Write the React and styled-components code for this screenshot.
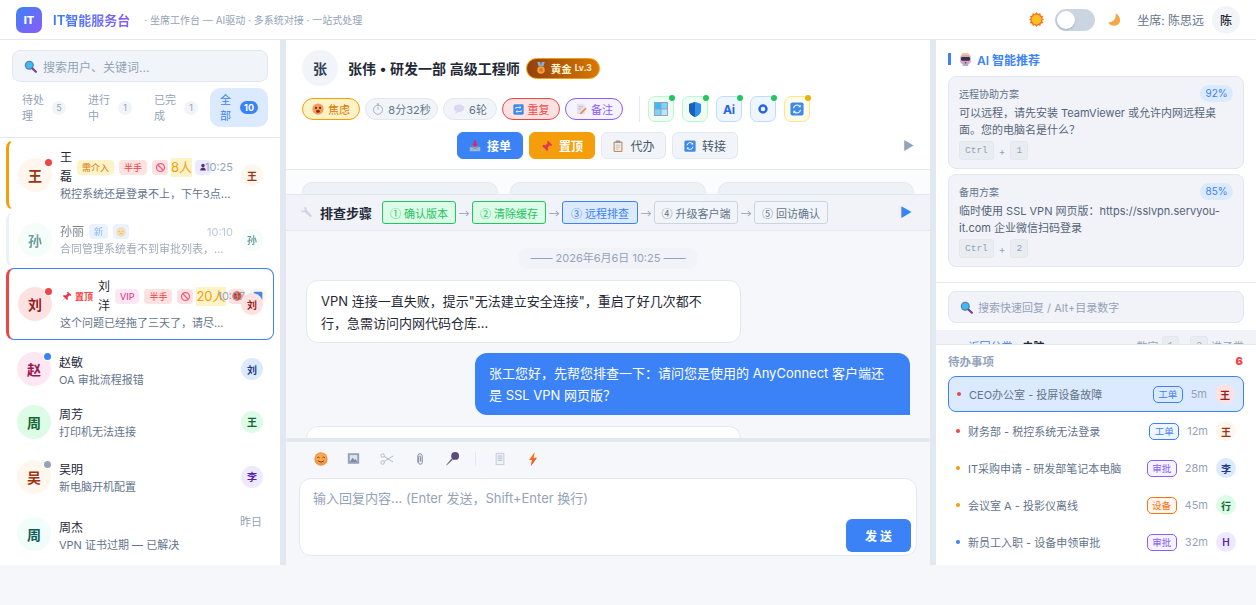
import React from 'react';
import styled, { createGlobalStyle } from 'styled-components';

const GlobalStyle = createGlobalStyle`
  html, body { margin: 0; padding: 0; background: #f5f7fb; }
  body { font-family: Inter, "Noto Sans CJK SC", "Noto Sans", sans-serif; color: #1f2937; }
  * { box-sizing: border-box; }
`;

const Shell = styled.div`
  height: 565px;
  display: flex;
  flex-direction: column;
  overflow: hidden;
`;

const TopBar = styled.header`
  height: 40px;
  flex: none;
  display: flex;
  align-items: center;
  padding: 0 16px;
  background: #fff;
  border-bottom: 1px solid #e2e8f0;
`;

const Logo = styled.div`
  width: 26px;
  height: 26px;
  border-radius: 7px;
  background: linear-gradient(135deg, #3b82f6, #8b5cf6);
  color: #fff;
  font-size: 11px;
  font-weight: 800;
  display: flex;
  align-items: center;
  justify-content: center;
`;

const Brand = styled.div`
  margin-left: 11px;
  font-size: 13px;
  font-weight: 700;
  background: linear-gradient(90deg, #3b82f6, #8b5cf6);
  -webkit-background-clip: text;
  background-clip: text;
  color: transparent;
`;

const Tagline = styled.div`
  margin-left: 14px;
  font-size: 10px;
  color: #94a3b8;
`;

const TopRight = styled.div`
  margin-left: auto;
  display: flex;
  align-items: center;
`;

const Toggle = styled.div`
  width: 40px;
  height: 22px;
  margin: 0 12px 0 11px;
  border-radius: 11px;
  background: #cbd5e1;
  padding: 2px;
`;

const Knob = styled.div`
  width: 18px;
  height: 18px;
  border-radius: 50%;
  background: #fff;
  box-shadow: 0 1px 2px rgba(0, 0, 0, 0.2);
`;

const Agent = styled.span`
  margin: 0 8px 0 16px;
  font-size: 12px;
  color: #64748b;
`;

const AgentAvatar = styled.div`
  width: 28px;
  height: 28px;
  border-radius: 50%;
  background: #f1f5f9;
  font-size: 12px;
  font-weight: 500;
  display: flex;
  align-items: center;
  justify-content: center;
`;

const Columns = styled.div`
  flex: 1;
  min-height: 0;
  display: flex;
`;

const Splitter = styled.div`
  width: 6px;
  flex: none;
  background: #e2e8f0;
`;

/* left column */
const LeftPanel = styled.aside`
  width: 280px;
  flex: none;
  background: #fff;
  display: flex;
  flex-direction: column;
  overflow: hidden;
`;

const SearchWrap = styled.div`
  padding: 10px 12px 6px;
`;

const SearchBox = styled.div`
  height: 32px;
  display: flex;
  align-items: center;
  gap: 6px;
  padding: 0 11px;
  background: #f1f5f9;
  border: 1px solid #e2e8f0;
  border-radius: 8px;
  font-size: 12px;
  color: #94a3b8;
`;

const TabRow = styled.div`
  display: grid;
  grid-template-columns: 64px 64px 64px 58px;
  gap: 2px;
  margin: 0 12px;
  padding-bottom: 10px;
`;

const Tab = styled.div`
  height: 39px;
  padding: 0 10px;
  border-radius: 10px;
  display: flex;
  align-items: center;
  gap: 8px;
  font-size: 11px;
  line-height: 16px;
  color: ${p => (p.$active ? '#3b82f6' : '#94a3b8')};
  background: ${p => (p.$active ? '#dbeafe' : 'transparent')};
`;

const TabLabel = styled.span`
  flex: 1;
  min-width: 0;
`;

const TabCount = styled.span`
  flex: none;
  min-width: ${p => (p.$active ? '18px' : '14px')};
  height: ${p => (p.$active ? '13px' : '14px')};
  border-radius: 7px;
  font-size: 9px;
  font-weight: ${p => (p.$active ? 700 : 400)};
  text-align: center;
  line-height: ${p => (p.$active ? '13px' : '14px')};
  color: ${p => (p.$active ? '#fff' : '#94a3b8')};
  background: ${p => (p.$active ? '#3b82f6' : '#f1f5f9')};
`;

const ChatList = styled.div`
  flex: 1;
  min-height: 0;
  border-top: 1px solid #e2e8f0;
  padding-top: 2px;
  overflow: hidden;
`;

const ChatItem = styled.div`
  position: relative;
  display: flex;
  align-items: center;
  height: ${p => p.$height}px;
  margin: ${p => p.$gap || 0}px 6px 0;
  padding: 0 10px 0 9px;
  border: 1px solid ${p => (p.$selected ? '#3b82f6' : 'transparent')};
  border-left: ${p => (p.$edge ? '3px' : '2px')} solid ${p => p.$edge || 'transparent'};
  border-radius: 8px;
  background: #fff;
  opacity: ${p => (p.$faded ? 0.6 : 1)};
`;

const Avatar = styled.div`
  position: relative;
  flex: none;
  width: ${p => p.$size}px;
  height: ${p => p.$size}px;
  border-radius: 50%;
  display: flex;
  align-items: center;
  justify-content: center;
  font-size: ${p => p.$font}px;
  font-weight: 600;
  color: ${p => p.$fg};
  background: ${p => p.$bg};
`;

const StatusDot = styled.i`
  position: absolute;
  top: 1px;
  right: 0;
  width: 7px;
  height: 7px;
  border-radius: 50%;
  background: ${p => p.$color};
  box-shadow: 0 0 0 1px #fff;
`;

const ChatBody = styled.div`
  flex: 1;
  min-width: 0;
  margin: 0 8px;
`;

const ChatHead = styled.div`
  display: flex;
  align-items: center;
`;

const NameRow = styled.div`
  flex: 1;
  min-width: 0;
  display: flex;
  align-items: center;
  gap: 5px;
`;

const Name = styled.span`
  flex: 0 1 auto;
  font-size: 12px;
  line-height: 19px;
  color: #1f2937;
`;

const Tag = styled.span`
  flex: none;
  height: 15px;
  padding: 0 5px;
  border-radius: 4px;
  display: inline-flex;
  align-items: center;
  justify-content: center;
  font-size: 9px;
  line-height: 15px;
  white-space: nowrap;
  color: ${p => p.$fg};
  background: ${p => p.$bg};
`;

const IconTag = styled(Tag)`
  width: 16px;
  padding: 0;
`;

const CountTag = styled.span`
  flex: none;
  margin: 0 -2px;
  font-size: 13px;
  line-height: 19px;
  white-space: nowrap;
  color: #f59e0b;
  background: #fef3c7;
`;

const PinMark = styled.span`
  flex: none;
  margin-left: 2px;
  display: inline-flex;
  align-items: center;
  gap: 3px;
  font-size: 9px;
  font-weight: 600;
  white-space: nowrap;
  color: #ef4444;
`;

const Time = styled.span`
  flex: none;
  margin-right: ${p => (p.$pushed ? '-12px' : '0')};
  font-size: 11px;
  color: #94a3b8;
  position: relative;
`;

const Preview = styled.div`
  margin-top: ${p => p.$top || 0}px;
  font-size: 11px;
  line-height: 16px;
  color: #64748b;
  white-space: nowrap;
`;

const CornerTime = styled.span`
  position: absolute;
  top: 8px;
  right: 11px;
  font-size: 11px;
  color: #94a3b8;
`;

/* center column */
const CenterPanel = styled.main`
  flex: 1;
  min-width: 0;
  display: flex;
  flex-direction: column;
  background: #f5f7fb;
`;

const TicketHeader = styled.section`
  height: 130px;
  flex: none;
  padding: 10px 16px 0;
  background: #fff;
  border-bottom: 1px solid #e2e8f0;
`;

const UserRow = styled.div`
  display: flex;
  align-items: center;
  gap: 10px;
`;

const TitleText = styled.span`
  font-size: 14px;
  font-weight: 600;
  color: #1f2937;
`;

const LevelBadge = styled.span`
  height: 21px;
  margin-left: -4px;
  padding: 0 7px 0 8px;
  display: inline-flex;
  align-items: center;
  gap: 4px;
  border-radius: 11px;
  border: 1px solid #f59e0b;
  background: linear-gradient(90deg, #92400e, #d97706);
  color: #fef3c7;
  font-size: 10.5px;
  font-weight: 700;
  small { margin-left: -1px; font-size: 8.5px; font-weight: 700; }
`;

const MetaRow = styled.div`
  margin-top: 10px;
  height: 26px;
  display: flex;
  align-items: center;
  gap: 5px;
`;

const Chip = styled.span`
  height: 22px;
  width: ${p => p.$width}px;
  display: inline-flex;
  align-items: center;
  justify-content: center;
  gap: 4px;
  border-radius: 11px;
  font-size: 11px;
  white-space: nowrap;
  color: ${p => p.$fg};
  background: ${p => p.$bg};
  border: 1px solid ${p => p.$line};
`;

const MetaDivider = styled.span`
  width: 1px;
  height: 26px;
  margin: 0 3px 0 11px;
  background: #e2e8f0;
`;

const ToolRow = styled.div`
  display: flex;
  gap: 8px;
`;

const ToolIcon = styled.div`
  position: relative;
  width: 26px;
  height: 26px;
  border-radius: 7px;
  display: flex;
  align-items: center;
  justify-content: center;
  font-size: 12px;
  font-weight: 700;
  color: #2563eb;
  background: ${p => p.$bg};
  border: 1px solid ${p => p.$line};
`;

const ToolLed = styled.i`
  position: absolute;
  top: -2px;
  right: -2px;
  width: 6px;
  height: 6px;
  border-radius: 50%;
  background: ${p => p.$color};
`;

const ActionRow = styled.div`
  margin-top: 10px;
  display: flex;
  align-items: center;
`;

const ActionGroup = styled.div`
  flex: 1;
  display: flex;
  justify-content: center;
  gap: 6px;
`;

const ActionButton = styled.button`
  height: 27px;
  width: ${p => p.$width || 66}px;
  padding: 0;
  display: inline-flex;
  align-items: center;
  justify-content: center;
  gap: 6px;
  border-radius: 6px;
  font-family: inherit;
  font-size: 12px;
  font-weight: ${p => (p.$solid ? 600 : 400)};
  color: ${p => (p.$solid ? '#fff' : '#475569')};
  background: ${p => p.$solid || '#f1f5f9'};
  border: 1px solid ${p => p.$solid || '#e2e8f0'};
`;

const PlayButton = styled.span`
  flex: none;
  width: 21px;
  text-align: right;
  font-size: 12px;
  line-height: 1;
  color: #94a3b8;
`;

const CardStrip = styled.div`
  height: 24px;
  flex: none;
  padding: 12px 16px 0;
  display: grid;
  grid-template-columns: repeat(3, 1fr);
  gap: 12px;
  overflow: hidden;
  background: #fbfcfe;
`;

const GhostCard = styled.div`
  height: 40px;
  background: #eef1f6;
  border: 1px solid #e2e8f0;
  border-radius: 10px;
`;

const StepBar = styled.div`
  height: 37px;
  flex: none;
  display: flex;
  align-items: center;
  padding: 0 18px 0 14px;
  background: #f1f3f8;
  border-top: 1px solid #e2e8f0;
  border-bottom: 1px solid #e2e8f0;
`;

const StepTitle = styled.span`
  margin: 0 10px 0 7px;
  font-size: 13px;
  font-weight: 600;
  color: #1f2937;
  white-space: nowrap;
`;

const Step = styled.span`
  flex: none;
  height: 23px;
  width: ${p => p.$width}px;
  display: inline-flex;
  align-items: center;
  justify-content: center;
  gap: 3px;
  border-radius: 3px;
  font-size: 11px;
  white-space: nowrap;
  color: ${p => p.$fg};
  background: ${p => p.$bg};
  border: 1px solid ${p => p.$line};
`;

const StepNumber = styled.span`
  font-family: "Noto Sans CJK SC", sans-serif;
  font-size: 11px;
`;

const StepArrow = styled.span`
  flex: none;
  width: 16px;
  text-align: center;
  font-family: "Noto Sans CJK SC", sans-serif;
  font-size: 11px;
  color: #94a3b8;
`;

const StepEnd = styled.span`
  margin-left: auto;
  font-size: 13px;
  line-height: 1;
  color: #3b82f6;
`;

const Messages = styled.div`
  flex: 1;
  min-height: 0;
  overflow: hidden;
  padding: 17px 20px 0;
  display: flex;
  flex-direction: column;
  align-items: flex-start;
`;

const DatePill = styled.div`
  align-self: center;
  height: 21px;
  padding: 0 12px;
  margin-bottom: 11px;
  border-radius: 10px;
  background: #f1f3f8;
  font-size: 11px;
  line-height: 21px;
  color: #94a3b8;
`;

const Bubble = styled.div`
  flex: none;
  width: 435px;
  padding: ${p => (p.$mine ? '9px 14px' : '8.5px 14px')};
  font-size: 13px;
  line-height: 22px;
  border-radius: ${p => (p.$mine ? '12px 12px 0 12px' : '12px')};
  margin-bottom: ${p => (p.$mine ? '11px' : '10px')};
  align-self: ${p => (p.$mine ? 'flex-end' : 'flex-start')};
  color: ${p => (p.$mine ? '#fff' : '#1f2937')};
  background: ${p => (p.$mine ? '#3b82f6' : '#fff')};
  border: ${p => (p.$mine ? '0' : '1px solid #e2e8f0')};
`;

const InputSplit = styled.div`
  height: 4px;
  flex: none;
  background: #e2e8f0;
`;

const Composer = styled.section`
  height: 123px;
  flex: none;
  padding: 5px 13px 0;
`;

const ComposeTools = styled.div`
  height: 23px;
  display: flex;
  align-items: center;
  padding-left: 14px;
  gap: 18px;
`;

const ComposeTool = styled.span`
  width: 15px;
  display: flex;
  justify-content: center;
`;

const ComposeDivider = styled.i`
  width: 1px;
  height: 14px;
  margin: 0 -2px 0 -3px;
  background: #e2e8f0;
`;

const InputBox = styled.div`
  position: relative;
  margin-top: 8px;
  height: 78px;
  padding: 11px 13px;
  background: #fff;
  border: 1px solid #e2e8f0;
  border-radius: 12px;
  font-size: 13px;
  line-height: 16px;
  color: #94a3b8;
`;

const SendButton = styled.button`
  position: absolute;
  right: 5px;
  bottom: 3px;
  width: 65px;
  height: 33px;
  border: 0;
  border-radius: 6px;
  background: #3b82f6;
  color: #fff;
  font-family: inherit;
  font-size: 12px;
  font-weight: 600;
`;

/* right column */
const RightPanel = styled.aside`
  width: 320px;
  flex: none;
  display: flex;
  flex-direction: column;
  background: #fff;
  overflow: hidden;
`;

const AiSection = styled.section`
  height: 243px;
  flex: none;
  padding: 13px 12px 0;
  border-bottom: 1px solid #e2e8f0;
`;

const AiTitle = styled.div`
  height: 12px;
  display: flex;
  align-items: center;
  gap: 5px;
  padding-left: 8px;
  border-left: 3px solid #3b82f6;
  font-size: 12px;
  font-weight: 600;
  color: #3b82f6;
  margin-bottom: 11px;
`;

const Suggestion = styled.div`
  height: 93px;
  padding: 8px 10px 0;
  margin-bottom: 5px;
  background: #f1f3f8;
  border: 1px solid #e2e8f0;
  border-radius: 8px;
`;

const SuggestionHead = styled.div`
  height: 17px;
  display: flex;
  align-items: center;
  justify-content: space-between;
  font-size: 10px;
  color: #64748b;
`;

const Score = styled.span`
  width: 33px;
  height: 17px;
  border-radius: 9px;
  background: #dbeafe;
  color: #3b82f6;
  font-size: 10px;
  line-height: 17px;
  text-align: center;
`;

const SuggestionText = styled.div`
  margin-top: 3px;
  font-size: 11px;
  line-height: 17px;
  color: #556378;
`;

const Shortcut = styled.div`
  margin-top: 2px;
  display: flex;
  align-items: center;
  gap: 5px;
  font-size: 10px;
  color: #94a3b8;
`;

const Key = styled.kbd`
  height: 19px;
  padding: 0 5px;
  border-radius: 3px;
  background: #e9edf2;
  border: 1px solid #e2e8f0;
  font-family: "Liberation Mono", monospace;
  font-size: 9.5px;
  line-height: 17px;
  color: #94a3b8;
`;

const QuickSearchWrap = styled.div`
  height: 47px;
  flex: none;
  padding: 8px 12px 0;
`;

const QuickSearch = styled(SearchBox)`
  gap: 5px;
  background: #f1f3f8;
  font-size: 11px;
`;

const CrumbStrip = styled.div`
  height: 14px;
  flex: none;
  overflow: hidden;
  padding: 6px 12px 0 19px;
  background: #f1f3f8;
`;

const CrumbRow = styled.div`
  height: 19px;
  display: flex;
  align-items: center;
  justify-content: space-between;
  font-size: 11px;
  color: #94a3b8;
`;

const CrumbBack = styled.span`
  color: #3b82f6;
  margin-right: 10px;
`;

const CrumbCurrent = styled.span`
  color: #1f2937;
  font-weight: 600;
`;

const CrumbHint = styled.span`
  display: flex;
  align-items: center;
  gap: 3px;
`;

const TodoSection = styled.section`
  flex: 1;
  min-height: 0;
  padding: 0 12px;
  background: #fff;
  border-top: 1px solid #e2e8f0;
`;

const TodoHead = styled.div`
  height: 31px;
  display: flex;
  align-items: center;
  justify-content: space-between;
  font-size: 11.5px;
  font-weight: 600;
  color: #94a3b8;
  strong { color: #ef4444; font-size: 11px; padding-right: 1px; }
`;

const TodoRow = styled.div`
  height: 36px;
  margin-bottom: 1px;
  padding: 0 8px;
  display: flex;
  align-items: center;
  gap: 8px;
  border-radius: 8px;
  border: ${p => (p.$active ? '1px solid #3b82f6' : '0')};
  background: ${p => (p.$active ? '#dbeafe' : '#fff')};
`;

const TodoDot = styled.i`
  flex: none;
  width: 4px;
  height: 4px;
  border-radius: 50%;
  background: ${p => p.$color};
`;

const TodoText = styled.span`
  flex: 1;
  min-width: 0;
  font-size: 11px;
  color: #64748b;
  white-space: nowrap;
`;

const TodoTag = styled.span`
  flex: none;
  width: 30px;
  height: 17px;
  border-radius: 5px;
  font-size: 9.5px;
  line-height: 15px;
  text-align: center;
  color: ${p => p.$color};
  background: ${p => p.$bg};
  border: 1px solid ${p => p.$color};
`;

const TodoAge = styled.span`
  flex: none;
  font-size: 11px;
  color: #94a3b8;
`;

const IconSvg = styled.svg`
  flex: none;
  display: block;
`;

const drawings = {
  search: <><circle cx="6.5" cy="6.5" r="4.8" fill="#38bdf8" stroke="#5b7fa6" strokeWidth="1.6" /><path d="M10.4 10.4 14.6 14.6" stroke="#7b3f98" strokeWidth="2.6" strokeLinecap="round" /></>,
  sun: <><path d="M8 0l1.6 2.2L12 1l.6 2.6 2.6.6-1.2 2.4L16 8l-2 1.4 1.2 2.4-2.6.6L12 15l-2.4-1.2L8 16l-1.6-2.2L4 15l-.6-2.6-2.6-.6L2 9.4 0 8l2-1.4L.8 4.2l2.6-.6L4 1l2.4 1.2Z" fill="#f97316" /><circle cx="8" cy="8" r="5.2" fill="#fbbf24" /></>,
  moon: <path d="M9.5.8C11 5.5 8 10.5 1.5 10.8 4 15.5 11.5 16 14.3 11.2 16.3 7 13.8 1.8 9.5.8Z" fill="#f5a742" />,
  robot: <><rect x="3.5" y="0" width="9" height="4" rx="1.5" fill="#f6c98a" /><rect x="1.5" y="2.5" width="13" height="11" rx="3" fill="#e29fc0" /><rect x="2.5" y="5" width="11" height="4.6" rx="1.6" fill="#27364f" /><rect x="4.5" y="11" width="7" height="5" rx="1" fill="#b9a5d6" /><circle cx="8" cy="12" r="1" fill="#3f3f5a" /></>,
  anxious: <><circle cx="8" cy="8" r="7.5" fill="#f59a5b" /><circle cx="5.3" cy="6.5" r="1.4" fill="#5b2a12" /><circle cx="10.7" cy="6.5" r="1.4" fill="#5b2a12" /><ellipse cx="8" cy="11" rx="2.6" ry="2" fill="#8a2f1b" /></>,
  stopwatch: <><circle cx="8" cy="9" r="6" fill="none" stroke="#94a3b8" strokeWidth="1.1" /><path d="M6.5 1.2h3M8 1.2V3M8 9V4.8" stroke="#94a3b8" strokeWidth="1.1" fill="none" /></>,
  thought: <><ellipse cx="8" cy="7" rx="7" ry="5" fill="#ddd6f3" /><path d="M4 10.5 3 15 8 11Z" fill="#ddd6f3" /></>,
  repeat: <><rect x=".5" y=".5" width="15" height="15" rx="2" fill="#3f8ae8" /><path d="M4 7V5h7M9.5 3.2 11.5 5 9.5 6.8M12 9v2H5M6.5 9.2 4.5 11 6.5 12.8" fill="none" stroke="#fff" strokeWidth="1.2" /></>,
  memo: <><path d="M2.5 1h8l3 3v11h-11Z" fill="#e5e1ec" /><path d="M4.5 5h6M4.5 8h4" stroke="#b3adc0" /><path d="M7 13 14 6l1.5 1.5-7 7-2 .5Z" fill="#f08a4b" /></>,
  medal: <><path d="M3 0h4l1 5-3 1ZM13 0H9L8 5l3 1Z" fill="#7db4e6" /><circle cx="8" cy="10.5" r="5" fill="#f0a23c" /><circle cx="8" cy="10.5" r="2.6" fill="#d97c1a" /></>,
  inbox: <><path d="M1 9h14v6H1Z" fill="#9db4cf" /><path d="M1 9h4l1 2h4l1-2h4" fill="none" stroke="#5b83b3" /><path d="M6.4 1h3.2v4H12L8 9.5 4 5h2.4Z" fill="#e0245e" /></>,
  pin: <><path d="M9.5 1 15 6.5 13.5 8 12 7 9 10l.5 3L8 14.5 1.5 8 3 6.5l3 .5 3-3-1-1.5Z" fill="#e8354f" /><path d="M4.5 11.5 0.8 15.2" stroke="#a8b3c2" strokeWidth="1.2" /></>,
  clipboard: <><rect x="2" y="2" width="12" height="14" rx="1.5" fill="#c98a5e" /><rect x="3.5" y="3.8" width="9" height="10.8" fill="#f1ede7" /><rect x="5" y=".5" width="6" height="3" rx="1" fill="#8d98a8" /><path d="M5 7h6M5 9.5h6M5 12h4" stroke="#a8b3c2" /></>,
  refresh: <><rect x=".5" y=".5" width="15" height="15" rx="2" fill="#3f8ae8" /><path d="M4 7.2A4.2 4.2 0 0 1 11.4 5M12 8.8A4.2 4.2 0 0 1 4.6 11" fill="none" stroke="#fff" strokeWidth="1.3" /><path d="M12.2 3v3h-3ZM3.8 13v-3h3Z" fill="#fff" /></>,
  wrench: <path d="M1.5 4.5 4 6l2-1.5L4.8 1.8C7 .8 9 2.5 8.2 5l6 6.5c1 1.2-.8 3-2 2L6 7.6C3.6 8.4 1 7 1.5 4.5Z" fill="#d6d0e4" />,
  smile: <><circle cx="8" cy="8" r="7.6" fill="#f59145" /><circle cx="8" cy="7" r="6" fill="#f9b251" opacity=".7" /><path d="M3.6 6.6q1.4-1.6 2.8 0M9.6 6.6q1.4-1.6 2.8 0" stroke="#6b3410" strokeWidth="1" fill="none" /><path d="M4.5 10q3.5 3.4 7 0" stroke="#6b3410" strokeWidth="1.1" fill="none" /></>,
  picture: <><rect x="1" y="1.5" width="14" height="13" fill="#94a3b8" /><rect x="3.4" y="3.8" width="9.2" height="8.4" fill="#dbe3ee" /><path d="M3.4 12.2 7 7l2.5 3 1.2-1.3 1.9 3.5Z" fill="#7c8ba1" /></>,
  scissors: <><circle cx="3" cy="4" r="2" fill="none" stroke="#a8b3c2" strokeWidth="1" /><circle cx="3" cy="12" r="2" fill="none" stroke="#a8b3c2" strokeWidth="1" /><path d="M4.6 5 15 11.5M4.6 11 15 4.5" stroke="#a8b3c2" strokeWidth="1" /></>,
  clip: <path d="M5.5 12V4.5a2.5 2.5 0 0 1 5 0V12a2 2 0 0 1-4 0V6c0-1.6 2.2-1.6 2.2 0v5" fill="none" stroke="#7c8594" strokeWidth="1.1" />,
  mic: <><path d="M1.2 14.8 7 8l1.4 1.4-6.6 5.8Z" fill="#6b6676" /><circle cx="10.8" cy="5.2" r="4.2" fill="#5d4a78" /></>,
  page: <><rect x="3" y="1" width="10" height="14" fill="#c6d0e0" /><rect x="4.2" y="2.2" width="7.6" height="11.6" fill="#eef2f7" /><path d="M5.4 4.6h5.2M5.4 7h5.2M5.4 9.4h5.2" stroke="#a8b6c8" /></>,
  bolt: <><path d="M10 0 3.5 9H7L5.5 16 12.5 6.5H8.8Z" fill="#f97316" /><path d="M7 9 5.5 16 12.5 6.5Z" fill="#ef5a3c" /></>,
  blocked: <><circle cx="8" cy="8" r="5.8" fill="none" stroke="#ef5a7a" strokeWidth="1.8" /><path d="M4 4l8 8" stroke="#ef5a7a" strokeWidth="1.8" /></>,
  person: <><circle cx="8" cy="5" r="3.4" fill="#4c2f86" /><path d="M2.5 15c0-4.4 2.5-5.8 5.5-5.8s5.5 1.4 5.5 5.8Z" fill="#4c2f86" /></>,
  weary: <><circle cx="8" cy="8" r="7.5" fill="#f4c77a" /><path d="M4 7h2.6M9.4 7H12" stroke="#a3692a" strokeWidth="1" /><path d="M5.4 11.5q2.6-2 5.2 0" stroke="#a3692a" strokeWidth="1" fill="none" /></>,
  angry: <><circle cx="8" cy="8" r="7.5" fill="#e0563f" /><path d="M3.6 5l3 1.4M12.4 5l-3 1.4" stroke="#4a1a10" strokeWidth="1.2" /><path d="M5.4 11.4q2.6-2 5.2 0" stroke="#4a1a10" strokeWidth="1.1" fill="none" /></>,
  square: <rect x="1" y="1" width="14" height="14" rx="2" fill="#3f8ae8" />,
};

function Icon({ name, size = 12 }) {
  return <IconSvg width={size} height={size} viewBox="0 0 16 16">{drawings[name]}</IconSvg>;
}

const tones = {
  orange: ['#fff7ed', '#9a3412'],
  teal: ['#f0fdfa', '#115e59'],
  red: ['#fee2e2', '#991b1b'],
  pink: ['#fce7f3', '#9d174d'],
  blue: ['#dbeafe', '#1e3a8a'],
  green: ['#dcfce7', '#166534'],
  purple: ['#ede9fe', '#5b21b6'],
};

const tone = name => ({ $bg: tones[name][0], $fg: tones[name][1] });

const plainChats = [
  { id: 'zhao', initial: '赵', name: '赵敏', text: 'OA 审批流程报错', color: 'pink', dot: '#3b82f6', owner: '刘', ownerColor: 'blue', gap: 4, height: 50 },
  { id: 'fang', initial: '周', name: '周芳', text: '打印机无法连接', color: 'green', owner: '王', ownerColor: 'green', height: 55 },
  { id: 'wu', initial: '吴', name: '吴明', text: '新电脑开机配置', color: 'orange', dot: '#94a3b8', owner: '李', ownerColor: 'purple', height: 55 },
  { id: 'jie', initial: '周', name: '周杰', text: 'VPN 证书过期 — 已解决', color: 'teal', corner: '昨日', height: 60 },
];

const todos = [
  { text: 'CEO办公室 - 投屏设备故障', dot: '#ef4444', tag: '工单', tagColor: '#3b82f6', tagBg: '#dbeafe', age: '5m', who: '王', tone: 'red', active: true },
  { text: '财务部 - 税控系统无法登录', dot: '#ef4444', tag: '工单', tagColor: '#3b82f6', tagBg: '#eff6ff', age: '12m', who: '王', tone: 'orange' },
  { text: 'IT采购申请 - 研发部笔记本电脑', dot: '#f59e0b', tag: '审批', tagColor: '#8b5cf6', tagBg: '#f5f3ff', age: '28m', who: '李', tone: 'blue' },
  { text: '会议室 A - 投影仪离线', dot: '#f59e0b', tag: '设备', tagColor: '#f97316', tagBg: '#fff7ed', age: '45m', who: '行', tone: 'green' },
  { text: '新员工入职 - 设备申领审批', dot: '#3b82f6', tag: '审批', tagColor: '#8b5cf6', tagBg: '#f5f3ff', age: '32m', who: 'H', tone: 'purple' },
];

const steps = [
  { n: '①', label: '确认版本', width: 74, fg: '#22c55e', bg: '#dcfce7', line: '#22c55e' },
  { n: '②', label: '清除缓存', width: 74, fg: '#22c55e', bg: '#dcfce7', line: '#22c55e' },
  { n: '③', label: '远程排查', width: 76, fg: '#3b82f6', bg: '#dbeafe', line: '#3b82f6' },
  { n: '④', label: '升级客户端', width: 84, fg: '#64748b', bg: '#f1f5f9', line: '#cbd5e1' },
  { n: '⑤', label: '回访确认', width: 74, fg: '#64748b', bg: '#f1f5f9', line: '#cbd5e1' },
];

function WindowsGlyph() {
  return (
    <svg width="14" height="14" viewBox="0 0 14 14">
      <rect width="14" height="14" fill="#94a3b8" />
      <rect x="1" y="1" width="5.5" height="5.5" fill="#38bdf8" />
      <rect x="7.5" y="1" width="5.5" height="5.5" fill="#7dd3fc" />
      <rect x="1" y="7.5" width="5.5" height="5.5" fill="#7dd3fc" />
      <rect x="7.5" y="7.5" width="5.5" height="5.5" fill="#bae6fd" />
    </svg>
  );
}

function ShieldGlyph() {
  return (
    <svg width="14" height="15" viewBox="0 0 14 15">
      <path d="M7 0 L13 2 V8 C13 11.5 10 14 7 15 C4 14 1 11.5 1 8 V2 Z" fill="#94a3b8" />
      <path d="M7 0 L13 2 V8 C13 11.5 10 14 7 15 Z" fill="#2f8ff0" />
      <path d="M7 0 L1 2 V8 C1 11.5 4 14 7 15 Z" fill="#1d5fb8" />
    </svg>
  );
}

function RingGlyph() {
  return (
    <svg width="10" height="10" viewBox="0 0 10 10">
      <circle cx="5" cy="5" r="3.5" fill="none" stroke="#2563eb" strokeWidth="2.4" />
    </svg>
  );
}

export default function App() {
  return (
    <Shell>
      <GlobalStyle />
      <TopBar>
        <Logo>IT</Logo>
        <Brand>IT智能服务台</Brand>
        <Tagline>· 坐席工作台 — AI驱动 · 多系统对接 · 一站式处理</Tagline>
        <TopRight>
          <Icon name="sun" size={15} />
          <Toggle><Knob /></Toggle>
          <Icon name="moon" size={14} />
          <Agent>坐席: 陈思远</Agent>
          <AgentAvatar>陈</AgentAvatar>
        </TopRight>
      </TopBar>

      <Columns>
        <LeftPanel>
          <SearchWrap>
            <SearchBox><Icon name="search" size={13} />搜索用户、关键词...</SearchBox>
          </SearchWrap>
          <TabRow>
            <Tab><TabLabel>待处理</TabLabel><TabCount>5</TabCount></Tab>
            <Tab><TabLabel>进行中</TabLabel><TabCount>1</TabCount></Tab>
            <Tab><TabLabel>已完成</TabLabel><TabCount>1</TabCount></Tab>
            <Tab $active><TabLabel>全部</TabLabel><TabCount $active>10</TabCount></Tab>
          </TabRow>
          <ChatList>
            <ChatItem $height={70} $edge="#f59e0b">
              <Avatar $size={34} $font={14} {...tone('orange')}>王<StatusDot $color="#ef4444" /></Avatar>
              <ChatBody>
                <ChatHead>
                  <NameRow>
                    <Name>王磊</Name>
                    <Tag $fg="#d97706" $bg="#fef3c7">需介入</Tag>
                    <Tag $fg="#ef4444" $bg="#fee2e2">半手</Tag>
                    <IconTag $bg="#fee2e2"><Icon name="blocked" size={11} /></IconTag>
                    <CountTag>8人</CountTag>
                    <IconTag $bg="#ede9fe"><Icon name="person" size={8} /></IconTag>
                  </NameRow>
                  <Time>10:25</Time>
                </ChatHead>
                <Preview>税控系统还是登录不上，下午3点...</Preview>
              </ChatBody>
              <Avatar $size={22} $font={10} {...tone('orange')}>王</Avatar>
            </ChatItem>

            <ChatItem $height={55} $gap={2} $edge="#e2e8f0" $faded>
              <Avatar $size={34} $font={14} {...tone('teal')}>孙</Avatar>
              <ChatBody>
                <ChatHead>
                  <NameRow>
                    <Name>孙丽</Name>
                    <Tag $fg="#3b82f6" $bg="#dbeafe">新</Tag>
                    <IconTag $bg="#dbeafe"><Icon name="weary" size={10} /></IconTag>
                  </NameRow>
                  <Time>10:10</Time>
                </ChatHead>
                <Preview>合同管理系统看不到审批列表，...</Preview>
              </ChatBody>
              <Avatar $size={22} $font={10} {...tone('teal')}>孙</Avatar>
            </ChatItem>

            <ChatItem $height={72} $gap={1} $edge="#ef4444" $selected>
              <Avatar $size={34} $font={14} {...tone('red')}>刘<StatusDot $color="#ef4444" /></Avatar>
              <ChatBody>
                <ChatHead>
                  <NameRow>
                    <PinMark><Icon name="pin" size={10} />置顶</PinMark>
                    <Name>刘洋</Name>
                    <Tag $fg="#db2777" $bg="#fce7f3">VIP</Tag>
                    <Tag $fg="#ef4444" $bg="#fee2e2">半手</Tag>
                    <IconTag $bg="#fee2e2"><Icon name="blocked" size={11} /></IconTag>
                    <CountTag>20人</CountTag>
                    <IconTag $bg="#fee2e2"><Icon name="angry" size={10} /></IconTag>
                    <IconTag $bg="#fff7ed"><Icon name="square" size={10} /></IconTag>
                  </NameRow>
                  <Time $pushed>10:07</Time>
                </ChatHead>
                <Preview>这个问题已经拖了三天了，请尽...</Preview>
              </ChatBody>
              <Avatar $size={22} $font={10} {...tone('red')}>刘</Avatar>
            </ChatItem>

            {plainChats.map(chat => (
              <ChatItem key={chat.id} $height={chat.height} $gap={chat.gap}>
                <Avatar $size={34} $font={14} {...tone(chat.color)}>
                  {chat.initial}
                  {chat.dot && <StatusDot $color={chat.dot} />}
                </Avatar>
                <ChatBody>
                  <Name>{chat.name}</Name>
                  <Preview>{chat.text}</Preview>
                </ChatBody>
                {chat.owner && <Avatar $size={22} $font={10} {...tone(chat.ownerColor)}>{chat.owner}</Avatar>}
                {chat.corner && <CornerTime>{chat.corner}</CornerTime>}
              </ChatItem>
            ))}
          </ChatList>
        </LeftPanel>

        <Splitter />

        <CenterPanel>
          <TicketHeader>
            <UserRow>
              <Avatar $size={36} $font={14} $bg="#f1f5f9" $fg="#334155">张</Avatar>
              <TitleText>张伟 • 研发一部 高级工程师</TitleText>
              <LevelBadge><Icon name="medal" size={12} />黄金 <small>Lv.3</small></LevelBadge>
            </UserRow>
            <MetaRow>
              <Chip $width={58} $fg="#d97706" $bg="#fef3c7" $line="#f59e0b"><Icon name="anxious" />焦虑</Chip>
              <Chip $width={73} $fg="#64748b" $bg="#f1f5f9" $line="#e2e8f0"><Icon name="stopwatch" />8分32秒</Chip>
              <Chip $width={54} $fg="#64748b" $bg="#f1f5f9" $line="#e2e8f0"><Icon name="thought" />6轮</Chip>
              <Chip $width={58} $fg="#ef4444" $bg="#fee2e2" $line="#ef4444"><Icon name="repeat" size={11} />重复</Chip>
              <Chip $width={58} $fg="#8b5cf6" $bg="#f5f3ff" $line="#8b5cf6"><Icon name="memo" />备注</Chip>
              <MetaDivider />
              <ToolRow>
                <ToolIcon $bg="#f0fdf4" $line="#bbf7d0"><WindowsGlyph /><ToolLed $color="#22c55e" /></ToolIcon>
                <ToolIcon $bg="#f0fdf4" $line="#bbf7d0"><ShieldGlyph /><ToolLed $color="#22c55e" /></ToolIcon>
                <ToolIcon $bg="#eff6ff" $line="#bfdbfe">Ai<ToolLed $color="#22c55e" /></ToolIcon>
                <ToolIcon $bg="#eff6ff" $line="#bfdbfe"><RingGlyph /><ToolLed $color="#22c55e" /></ToolIcon>
                <ToolIcon $bg="#fffbeb" $line="#fde68a"><Icon name="refresh" size={14} /><ToolLed $color="#eab308" /></ToolIcon>
              </ToolRow>
            </MetaRow>
            <ActionRow>
              <ActionGroup>
                <ActionButton $solid="#3b82f6"><Icon name="inbox" />接单</ActionButton>
                <ActionButton $solid="#f59e0b"><Icon name="pin" />置顶</ActionButton>
                <ActionButton $width={65}><Icon name="clipboard" />代办</ActionButton>
                <ActionButton><Icon name="refresh" />转接</ActionButton>
              </ActionGroup>
              <PlayButton>▶</PlayButton>
            </ActionRow>
          </TicketHeader>

          <CardStrip>
            <GhostCard />
            <GhostCard />
            <GhostCard />
          </CardStrip>

          <StepBar>
            <Icon name="wrench" size={13} />
            <StepTitle>排查步骤</StepTitle>
            {steps.map((step, i) => (
              <React.Fragment key={step.label}>
                {i > 0 && <StepArrow>→</StepArrow>}
                <Step $width={step.width} $fg={step.fg} $bg={step.bg} $line={step.line}>
                  <StepNumber>{step.n}</StepNumber>{step.label}
                </Step>
              </React.Fragment>
            ))}
            <StepEnd>▶</StepEnd>
          </StepBar>

          <Messages>
            <DatePill>—— 2026年6月6日 10:25 ——</DatePill>
            <Bubble>VPN 连接一直失败，提示"无法建立安全连接"，重启了好几次都不行，急需访问内网代码仓库...</Bubble>
            <Bubble $mine>张工您好，先帮您排查一下：请问您是使用的 AnyConnect 客户端还是 SSL VPN 网页版？</Bubble>
            <Bubble>我用的是 AnyConnect 客户端</Bubble>
          </Messages>

          <InputSplit />

          <Composer>
            <ComposeTools>
              <ComposeTool><Icon name="smile" size={14} /></ComposeTool>
              <ComposeTool><Icon name="picture" size={13} /></ComposeTool>
              <ComposeTool><Icon name="scissors" size={14} /></ComposeTool>
              <ComposeTool><Icon name="clip" size={14} /></ComposeTool>
              <ComposeTool><Icon name="mic" size={15} /></ComposeTool>
              <ComposeDivider />
              <ComposeTool><Icon name="page" size={14} /></ComposeTool>
              <ComposeTool><Icon name="bolt" size={14} /></ComposeTool>
            </ComposeTools>
            <InputBox>
              输入回复内容... (Enter 发送，Shift+Enter 换行)
              <SendButton>发 送</SendButton>
            </InputBox>
          </Composer>
        </CenterPanel>

        <Splitter />

        <RightPanel>
          <AiSection>
            <AiTitle><Icon name="robot" size={13} />AI 智能推荐</AiTitle>
            <Suggestion>
              <SuggestionHead>远程协助方案<Score>92%</Score></SuggestionHead>
              <SuggestionText>可以远程，请先安装 TeamViewer 或允许内网远程桌面。您的电脑名是什么？</SuggestionText>
              <Shortcut><Key>Ctrl</Key>+<Key>1</Key></Shortcut>
            </Suggestion>
            <Suggestion>
              <SuggestionHead>备用方案<Score>85%</Score></SuggestionHead>
              <SuggestionText>临时使用 SSL VPN 网页版：https://sslvpn.servyou-it.com 企业微信扫码登录</SuggestionText>
              <Shortcut><Key>Ctrl</Key>+<Key>2</Key></Shortcut>
            </Suggestion>
          </AiSection>
          <QuickSearchWrap>
            <QuickSearch><Icon name="search" size={13} />搜索快速回复 / Alt+目录数字</QuickSearch>
          </QuickSearchWrap>
          <CrumbStrip>
            <CrumbRow>
              <span><CrumbBack>← 返回分类</CrumbBack><CrumbCurrent>电脑</CrumbCurrent></span>
              <CrumbHint>数字 <Key>1</Key> - <Key>2</Key> 进子类</CrumbHint>
            </CrumbRow>
          </CrumbStrip>
          <TodoSection>
            <TodoHead>待办事项<strong>6</strong></TodoHead>
            {todos.map(todo => (
              <TodoRow key={todo.text} $active={todo.active}>
                <TodoDot $color={todo.dot} />
                <TodoText>{todo.text}</TodoText>
                <TodoTag $color={todo.tagColor} $bg={todo.tagBg}>{todo.tag}</TodoTag>
                <TodoAge>{todo.age}</TodoAge>
                <Avatar $size={20} $font={10} {...tone(todo.tone)}>{todo.who}</Avatar>
              </TodoRow>
            ))}
          </TodoSection>
        </RightPanel>
      </Columns>
    </Shell>
  );
}
